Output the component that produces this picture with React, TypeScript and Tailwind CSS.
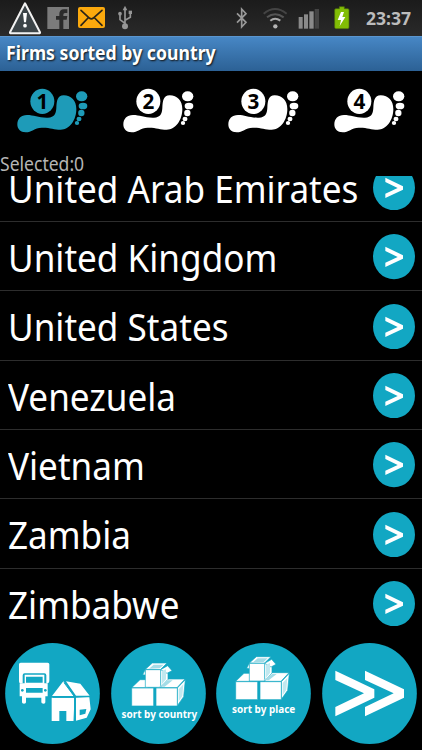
const countries = [
  "United Arab Emirates",
  "United Kingdom",
  "United States",
  "Venezuela",
  "Vietnam",
  "Zambia",
  "Zimbabwe",
]

function StatusBar() {
  return (
    <div className="flex h-[36px] shrink-0 items-center justify-between bg-linear-to-b from-[#1b1b1b] to-[#2a2a2a]">
      <svg viewBox="0 0 420 108" className="h-[36px] w-[140px]">
        <path d="M75 10 L120 97 Q121 100 117 100 H33 Q29 100 30 97 Z" fill="#3c4448" stroke="#f2f2f2" strokeWidth="6" strokeLinejoin="round" />
        <path d="M69 39 h12 l-3 28 h-6 Z" fill="#fff" />
        <circle cx="75" cy="77" r="5.500" fill="#fff" />
        <rect x="142" y="21" width="65" height="66" fill="#7b7b7b" />
        <path d="M178 87 V59 H168 V48 H178 V42 Q178 28 192 28 H202 V39 H195 Q190 39 190 44 V48 H202 L200 59 H190 V87 Z" fill="#2b2b2b" />
        <rect x="234" y="21" width="81" height="63" rx="6" fill="#fba90d" />
        <path d="M243 31 L268 54 Q274 59 280 54 L306 31 M243 76 L264 54 M306 76 L284 54" fill="none" stroke="#2a2418" strokeWidth="5" strokeLinecap="round" />
        <path d="M375 82 V26 M375 70 L360 59 V44 M375 61 L391 52 V38" fill="none" stroke="#969696" strokeWidth="5" />
        <path d="M375 17 L382 31 H368 Z" fill="#969696" />
        <circle cx="375" cy="79" r="9" fill="#969696" />
        <circle cx="360" cy="41" r="5.500" fill="#969696" />
        <rect x="386" y="32" width="10" height="10" fill="#969696" />
      </svg>
      <div className="flex items-center">
        <svg viewBox="60 0 375 108" className="h-[36px] w-[125px]">
          <path d="M78 40 L105 67 L92 81 V27 L105 41 L78 68" fill="none" stroke="#999" strokeWidth="5" />
          <g fill="none">
            <path d="M158 41 Q192 13 227 41" stroke="#444" strokeWidth="6" />
            <path d="M168 52 Q192 33 218 52" stroke="#555" strokeWidth="6" />
            <path d="M178 62 Q192 50 208 62" stroke="#aaa" strokeWidth="6" />
          </g>
          <circle cx="193" cy="79" r="6.500" fill="#b5b5b5" />
          <rect x="263" y="51" width="12" height="35" fill="#8a8a8a" />
          <rect x="279" y="43" width="12" height="43" fill="#8a8a8a" />
          <rect x="295" y="34" width="13" height="52" fill="#8a8a8a" />
          <rect x="311" y="27" width="13" height="59" fill="#444" />
          <path d="M374 20 h15 v6 h10 q4 0 4 4 v52 q0 4 -4 4 h-35 q-4 0 -4 -4 v-52 q0 -4 4 -4 h10 Z" fill="#82bd05" stroke="#4c6c0a" strokeWidth="2" transform="translate(11 0)" />
          <path d="M390 36 L380 60 H390 L386 78 L403 51 H394 L399 36 Z" fill="#fff" />
        </svg>
        <div className="w-[66px] pl-[10px]">
          <span className="inline-block origin-left scale-x-[0.95] text-[18.500px] font-bold text-[#bcbcbc]">23:37</span>
        </div>
      </div>
    </div>
  )
}

function Foot({ step, active }: { step: number; active: boolean }) {
  return (
    <svg viewBox="50 35 216 140" className={`h-[46.700px] w-[72px] ${active ? "text-[#1e9bb8]" : "text-white"}`}>
      <g fill="currentColor">
        <path d="M54 147 C54 130 65 119 83 119 C104 119 118 128 146 127 C165 126 170 116 171 98 C172 77 174 60 193 60 C216 60 231 76 231 101 C231 134 211 163 184 163 C164 163 151 156 127 157 C105 158 97 171 79 171 C63 171 54 161 54 147 Z" />
        <ellipse cx="129" cy="78" rx="36" ry="38" />
        <ellipse cx="247" cy="63" rx="17" ry="15" />
        <ellipse cx="251" cy="92" rx="13" ry="10" />
        <ellipse cx="246" cy="113" rx="9.500" ry="9.500" />
        <ellipse cx="239" cy="131" rx="7.500" ry="6.500" />
        <ellipse cx="233" cy="143" rx="6.500" ry="6" />
      </g>
      <text x="129" y="100" textAnchor="middle" fontSize="62" fontWeight="700" fill="#000">
        {step}
      </text>
    </svg>
  )
}

function CountryRow({ name }: { name: string }) {
  return (
    <li className="flex h-[69.350px] shrink-0 items-center justify-between border-b border-[#2d2d2d] pt-[2px] pr-[7.500px] pl-[7.500px] last:border-b-0 last:pt-px">
      <span className="w-[360px]">
        <span className="inline-block origin-left scale-x-[0.9] text-[39px] leading-[54px] whitespace-nowrap text-white">{name}</span>
      </span>
      <svg viewBox="0 0 126 136" className="h-[45.300px] w-[42px] shrink-0">
        <ellipse cx="63" cy="68" rx="63" ry="68" fill="#12a7c3" />
        <path d="M37 38 L90 64 V74 L37 99 V86 L74 69 L37 51 Z" fill="#fff" />
      </svg>
    </li>
  )
}

// Three stacked cartons, the top one open
function Boxes() {
  return (
    <g strokeLinejoin="round">
      <g fill="#fff" stroke="#12a7c3" strokeWidth="2">
        <path d="M78 173 L103 149 H126 V173 Z" />
        <path d="M152 173 L185 147 H238 L214 173 Z" />
        <path d="M215 174 L239 149 L234 200 L215 227 Z" />
        <rect x="78" y="174" width="66" height="54" />
        <rect x="151" y="174" width="64" height="54" />
        <path d="M164 119 L187 108 V148 L164 173 Z" />
        <path d="M119 118 L140 99 H184 L164 119 Z" />
        <path d="M165 119 L186 107 L199 122 L184 130 Z" />
        <path d="M119 118 L111 134 L122 136 Z" />
        <rect x="119" y="119" width="46" height="53" />
      </g>
      <path d="M130 116 L144 104 H174 L162 115 Z M160 170 L188 151 H201 L177 170 Z" fill="#a4dce7" />
      <path d="M219 178 L233 163 L230 198 L219 214 Z M169 123 L181 118 V148 L169 162 Z" fill="#c1e8ef" />
    </g>
  )
}

function RoundButton({ children }: { children: React.ReactNode }) {
  return (
    <button className="flex justify-center">
      <svg viewBox="16 39 285 303" className="h-[101px] w-[95px]">
        <ellipse cx="158.500" cy="190.500" rx="142" ry="151.500" fill="#12a7c3" />
        {children}
      </svg>
    </button>
  )
}

export default function App() {
  return (
    <div className="flex h-[750px] w-[422px] flex-col overflow-hidden bg-black font-['Noto_Sans','Open_Sans',sans-serif]">
      <StatusBar />
      <div className="flex h-[35px] shrink-0 items-center border-t border-[#5b96cf] bg-linear-to-b from-[#4787c5] to-[#2c6195] pl-[6px]">
        <span className="inline-block origin-left -translate-y-px scale-x-[0.93] text-[19px] font-bold whitespace-nowrap text-white [text-shadow:1px_1px_2px_#111]">
          Firms sorted by country
        </span>
      </div>
      <div className="grid h-[80px] shrink-0 grid-cols-4 pt-[15.500px]">
        {[1, 2, 3, 4].map((step) => (
          <div key={step} className="pl-[16px]">
            <Foot step={step} active={step === 1} />
          </div>
        ))}
      </div>
      <div className="h-[25px] shrink-0">
        <span className="inline-block origin-left scale-x-[0.9] text-[19.500px] leading-[25px] text-[#b5b5b5]">Selected:0</span>
      </div>
      <div className="flex h-[462px] shrink-0 flex-col justify-end overflow-hidden">
        <ul className="flex flex-col">
          {countries.map((name) => (
            <CountryRow key={name} name={name} />
          ))}
        </ul>
      </div>
      <div className="grid grid-cols-4 pt-[5px]">
        <RoundButton>
          <g fill="#fff">
            <path d="M63 98 H144 Q149 98 149 103 V150 Q149 160 143 160 H140 V136 Q140 130 134 130 H75 Q69 130 69 136 V160 H62 Q58 160 58 154 V103 Q58 98 63 98 Z" />
            <path fillRule="evenodd" d="M75 134 H134 V160 H144 V199 H137 V217 Q137 221 132 221 Q125 221 125 217 V203 H79 V217 Q79 221 73 221 Q67 221 67 217 V199 H60 V160 H75 Z M79 140 V158 H129 V140 Z M79 174 V188 H129 V174 Z" />
            <path d="M157 198 L191 154 L222 198 Z M199 154 L242 161 L270 197 H229 Z" />
            <path d="M156 203 H223 V273 H200 V243 H179 V273 H156 Z" />
            <path fillRule="evenodd" d="M229 202 H269 L273 238 L261 263 L229 272 Z M240 239 V256 L257 251 L260 237 Z" />
          </g>
          <path d="M193 158 L226 202 L223 273 M159 202 H226 L270 199" fill="none" stroke="#12a7c3" strokeWidth="3" />
          <circle cx="68" cy="181" r="4" fill="#12a7c3" />
          <circle cx="137" cy="181" r="4" fill="#12a7c3" />
        </RoundButton>
        <RoundButton>
          <Boxes />
          <text x="161" y="265" textAnchor="middle" fontSize="31" fontWeight="700" fill="#fff" textLength="227" lengthAdjust="spacingAndGlyphs">
            sort by country
          </text>
        </RoundButton>
        <RoundButton>
          <g transform="translate(-3 -19)">
            <Boxes />
          </g>
          <text x="159" y="249" textAnchor="middle" fontSize="31" fontWeight="700" fill="#fff" textLength="190" lengthAdjust="spacingAndGlyphs">
            sort by place
          </text>
        </RoundButton>
        <RoundButton>
          <g fill="#fff">
            <path d="M56 122 L173 178 V203 L56 259 V231 L142 190 L56 150 Z" />
            <path d="M145 122 L262 178 V203 L145 259 V231 L231 190 L145 150 Z" />
          </g>
        </RoundButton>
      </div>
    </div>
  )
}
